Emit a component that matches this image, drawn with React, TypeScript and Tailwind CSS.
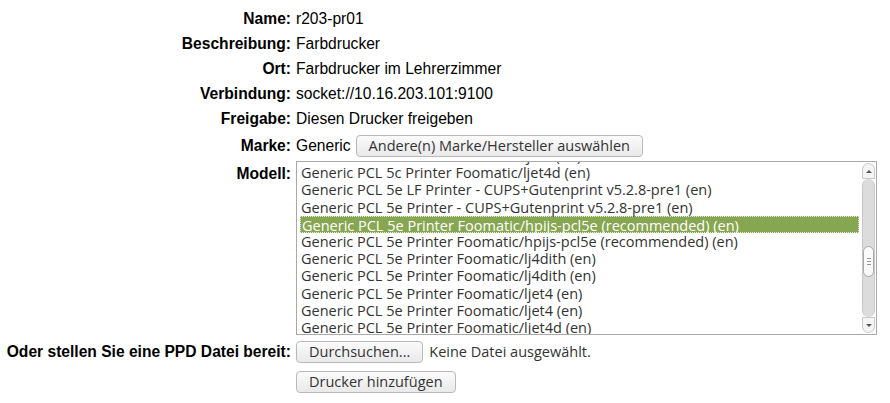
const models = [
  "Generic PCL 5c Printer Foomatic/ljet4 (en)",
  "Generic PCL 5c Printer Foomatic/ljet4d (en)",
  "Generic PCL 5e LF Printer - CUPS+Gutenprint v5.2.8-pre1 (en)",
  "Generic PCL 5e Printer - CUPS+Gutenprint v5.2.8-pre1 (en)",
  "Generic PCL 5e Printer Foomatic/hpijs-pcl5e (recommended) (en)",
  "Generic PCL 5e Printer Foomatic/hpijs-pcl5e (recommended) (en)",
  "Generic PCL 5e Printer Foomatic/lj4dith (en)",
  "Generic PCL 5e Printer Foomatic/lj4dith (en)",
  "Generic PCL 5e Printer Foomatic/ljet4 (en)",
  "Generic PCL 5e Printer Foomatic/ljet4 (en)",
  "Generic PCL 5e Printer Foomatic/ljet4d (en)",
];

const ui = "font-['Open_Sans',sans-serif] text-[14.5px] text-[#333]";

const Label = ({ children }: { children: React.ReactNode }) => (
  <div className="text-right font-bold text-black">{children}</div>
);

const Button = ({ children, className = "" }: { children: React.ReactNode; className?: string }) => (
  <button
    className={`h-[22px] rounded-[4px] border border-[#b9b9b9] bg-gradient-to-b from-[#fbfbfb] to-[#e9e9e9] px-[12px] leading-[20px] ${ui} ${className}`}
  >
    {children}
  </button>
);

const Scrollbar = () => (
  <div className="flex w-[14px] shrink-0 flex-col items-center py-[1px] pr-[1px]">
    <div className="flex h-[16px] w-[13px] items-center justify-center rounded-t-[7px] border border-[#c8c8c8] bg-[#f4f4f4]">
      <div className="h-0 w-0 border-x-[3px] border-b-[3px] border-x-transparent border-b-[#555]" />
    </div>
    <div className="flex w-[13px] flex-1 flex-col rounded-[7px] border-x border-[#c8c8c8] bg-[#dcdcdc]">
      <div className="h-[67px]" />
      <div className="flex h-[31px] flex-col items-center justify-center gap-[2px] rounded-[7px] border border-[#a8a8a8] bg-[#fafafa]">
        <div className="h-px w-[4px] bg-[#999]" />
        <div className="h-px w-[4px] bg-[#999]" />
        <div className="h-px w-[4px] bg-[#999]" />
      </div>
    </div>
    <div className="flex h-[16px] w-[13px] items-center justify-center rounded-b-[7px] border border-[#c8c8c8] bg-[#f4f4f4]">
      <div className="h-0 w-0 border-x-[3px] border-t-[3px] border-x-transparent border-t-[#555]" />
    </div>
  </div>
);

export default function App() {
  return (
    <div className="h-[403px] w-[890px] bg-white pt-[6px] font-['Liberation_Sans',Arial,sans-serif] text-[15.6px] text-black">
      <div className="grid grid-cols-[291px_1fr] items-center gap-x-[5px]">
        <div className="flex h-[25px] items-center justify-end"><Label>Name:</Label></div>
        <div>r203-pr01</div>
        <div className="flex h-[25px] items-center justify-end"><Label>Beschreibung:</Label></div>
        <div>Farbdrucker</div>
        <div className="flex h-[25px] items-center justify-end"><Label>Ort:</Label></div>
        <div>Farbdrucker im Lehrerzimmer</div>
        <div className="flex h-[25px] items-center justify-end"><Label>Verbindung:</Label></div>
        <div>socket://10.16.203.101:9100</div>
        <div className="flex h-[25px] items-center justify-end"><Label>Freigabe:</Label></div>
        <div>Diesen Drucker freigeben</div>

        <div className="flex h-[30px] items-center justify-end"><Label>Marke:</Label></div>
        <div className="flex items-center gap-[5px]">
          <span>Generic</span>
          <Button>Andere(n) Marke/Hersteller auswählen</Button>
        </div>

        <div className="self-start pt-[1px]"><Label>Modell:</Label></div>
        <div className="mr-[13px] flex h-[174px] border border-[#a9a9a9] bg-white">
          <div className="flex-1 overflow-hidden px-[3px]">
            <div className="-mt-[15px]">
              {models.map((m, i) => (
                <div
                  key={i}
                  className={`h-[17.2px] whitespace-nowrap px-[1px] leading-[17px] ${ui} ${
                    i === 4
                      ? "border border-dotted border-[#e6efd6] bg-[#87a651] leading-[15px] text-white"
                      : ""
                  }`}
                >
                  {m}
                </div>
              ))}
            </div>
          </div>
          <Scrollbar />
        </div>

        <div className="flex h-[32px] items-center justify-end whitespace-nowrap pt-[2px]"><Label>Oder stellen Sie eine PPD Datei bereit:</Label></div>
        <div className="flex items-center gap-[6px] pt-[2px]">
          <Button>Durchsuchen...</Button>
          <span className={`${ui} text-[#222]`}>Keine Datei ausgewählt.</span>
        </div>

        <div />
        <div className="pt-[3px]">
          <Button>Drucker hinzufügen</Button>
        </div>
      </div>
    </div>
  );
}
